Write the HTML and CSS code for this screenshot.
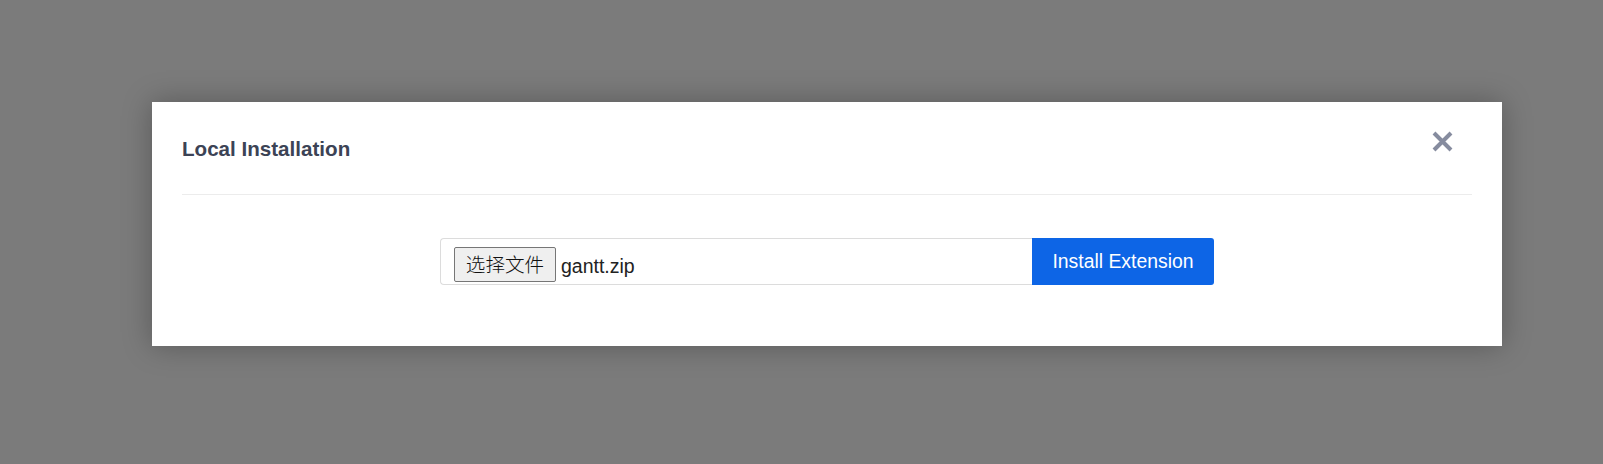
FILE: index.html
```html
<!DOCTYPE html>
<html lang="en">
<head>
<meta charset="utf-8">
<title>Local Installation</title>
<link rel="stylesheet" href="styles.css">
</head>
<body>
<div class="modal">
  <div class="modal-header">
    <h2 class="modal-title">Local Installation</h2>
    <button class="close-btn" aria-label="Close">
      <svg width="21" height="21" viewBox="0 0 21 21">
        <path d="M2 2 L19 19 M19 2 L2 19" stroke="#868c9f" stroke-width="4" stroke-linecap="butt" fill="none"/>
      </svg>
    </button>
  </div>
  <div class="modal-body">
    <div class="input-group">
      <div class="file-input">
        <span class="file-btn">选择文件</span>
        <span class="file-name">gantt.zip</span>
      </div>
      <button class="install-btn">Install Extension</button>
    </div>
  </div>
</div>
</body>
</html>
```
FILE: styles.css
```css
html, body {
  margin: 0;
  padding: 0;
}
body {
  background: #7b7b7b;
  height: 464px;
  overflow: hidden;
  font-family: "Liberation Sans", Arial, sans-serif;
}
.modal {
  width: 1350px;
  height: 244px;
  margin: 102px 0 0 152px;
  background: #fff;
  box-shadow: 0 0 28px rgba(0, 0, 0, 0.28);
  padding: 0 30px;
  box-sizing: border-box;
}
.modal-header {
  display: flex;
  justify-content: space-between;
  align-items: flex-start;
  height: 92px;
  border-bottom: 1px solid #ececec;
}
.modal-title {
  margin: 35px 0 0 0;
  font-size: 20.6px;
  font-weight: bold;
  line-height: 23px;
  color: #3c4355;
}
.close-btn {
  margin: 29px 19px 0 0;
  padding: 0;
  border: none;
  background: none;
  width: 21px;
  height: 21px;
  display: block;
}
.close-btn svg {
  display: block;
}
.modal-body {
  display: flex;
  justify-content: center;
  padding-top: 43px;
}
.input-group {
  display: flex;
  height: 47px;
}
.file-input {
  width: 592px;
  height: 47px;
  box-sizing: border-box;
  border: 1px solid #dcdcdc;
  border-right: none;
  border-radius: 4px 0 0 4px;
  display: flex;
  align-items: flex-start;
  padding: 8px 0 0 13px;
}
.file-btn {
  width: 102px;
  height: 35px;
  box-sizing: border-box;
  border: 1px solid #767676;
  border-radius: 2px;
  background: #efefef;
  font-family: "Noto Sans CJK SC", sans-serif;
  font-size: 19.6px;
  font-weight: 300;
  line-height: 32px;
  text-align: center;
  color: #111;
}
.file-name {
  margin-left: 5px;
  padding-top: 2px;
  font-size: 19.5px;
  line-height: 35px;
  color: #222;
}
.install-btn {
  width: 182px;
  height: 47px;
  border: none;
  border-radius: 0 3px 3px 0;
  background: #0d65e6;
  color: #fff;
  font-family: "Liberation Sans", Arial, sans-serif;
  font-size: 19.4px;
  padding: 0;
}
```
